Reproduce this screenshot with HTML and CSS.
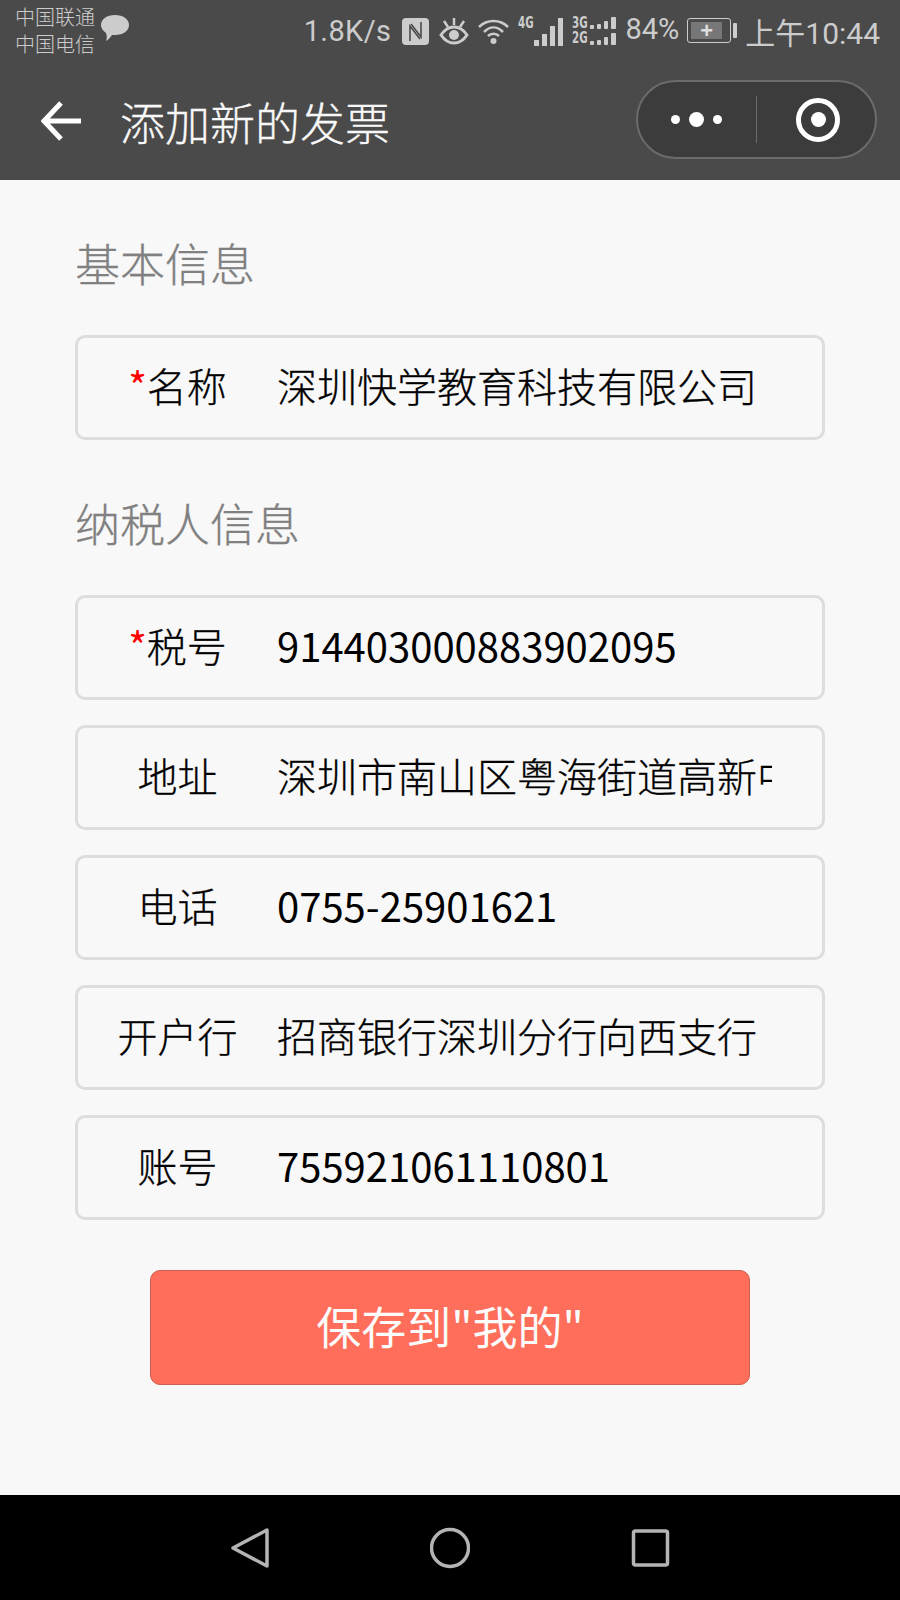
FILE: index.html
```html
<!DOCTYPE html>
<html>
	<head>
		<meta charset="UTF-8">
		<title>添加新的发票</title>
		<link rel="stylesheet" href="styles.css">
	</head>
	<body>
		<div class="header">
			<div class="status">
				<div class="carrier">
					<p>中国联通</p>
					<p>中国电信</p>
				</div>
				<svg class="bubble" width="30" height="28" viewBox="0 0 30 28"><path d="M15 1C23 1 29 5 29 11C29 17 23 21 15 21C14 21 13 21 12 21C10 24 8 26 6 27C7 24 7 22 6 19C3 17 1 14 1 11C1 5 7 1 15 1Z" fill="#ccc"/></svg>
				<div class="statusRight">
					<span class="speed">1.8K/s</span>
					<svg class="nfc" width="27" height="27" viewBox="0 0 27 27"><rect width="27" height="27" rx="4" fill="#ccc"/><path d="M8 23V8L18 21M19 4V19L9 6" fill="none" stroke="#4a4a4a" stroke-width="1.600"/></svg>
					<svg class="eye" width="30" height="28" viewBox="0 0 30 28"><path d="M2 18C6 12 10 10 15 10C20 10 24 12 28 18C24 24 20 26 15 26C10 26 6 24 2 18Z" fill="none" stroke="#ccc" stroke-width="3"/><circle cx="15" cy="18" r="5" fill="#ccc"/><path d="M15 1V8M5 4L9 10M25 4L21 10" stroke="#ccc" stroke-width="2.500"/></svg>
					<svg class="wifi" width="31" height="26" viewBox="0 0 31 26"><path d="M1 9C9 1 22 1 30 9M6 14C12 8 19 8 25 14M10 18C13 15 18 15 21 18" fill="none" stroke="#ccc" stroke-width="2.500"/><circle cx="15.500" cy="23" r="3" fill="#ccc"/></svg>
					<div class="signal">
						<span class="netTag">4G</span>
						<div class="bars">
							<i class="b1"></i><i class="b2"></i><i class="b3"></i><i class="b4"></i>
						</div>
					</div>
					<div class="signal2">
						<div class="netTags">
							<span>3G</span>
							<span>2G</span>
						</div>
						<svg width="29" height="30" viewBox="0 0 29 30" fill="#ccc">
							<rect x="1" y="9" width="4" height="4" rx="1"/><rect x="8" y="8" width="4" height="5" rx="1"/><rect x="15" y="5" width="4" height="8" rx="1"/><rect x="22" y="1" width="5" height="12" rx="1"/>
							<rect x="1" y="25" width="4" height="4" rx="1"/><rect x="8" y="24" width="4" height="5" rx="1"/><rect x="15" y="21" width="4" height="8" rx="1"/><rect x="22" y="17" width="5" height="12" rx="1"/>
						</svg>
					</div>
					<span class="percent">84%</span>
					<div class="battery">
						<div class="cell"><div class="level">+</div></div>
						<div class="nub"></div>
					</div>
					<span class="time">上午10:44</span>
				</div>
			</div>
			<div class="nav">
				<svg class="back" width="40" height="40" viewBox="0 0 40 40"><path d="M20 2L3 20L20 38M3 20H40" fill="none" stroke="#fff" stroke-width="5"/></svg>
				<h1>添加新的发票</h1>
				<div class="capsule">
					<div class="more"><i></i><i class="big"></i><i></i></div>
					<div class="line"></div>
					<div class="target"><div class="ring"><i></i></div></div>
				</div>
			</div>
		</div>

		<div class="content">
			<h2>基本信息</h2>
			<div class="row">
				<div class="label"><span class="must">*</span>名称</div>
				<div class="value">深圳快学教育科技有限公司</div>
			</div>

			<h2 class="second">纳税人信息</h2>
			<div class="rows">
				<div class="row">
					<div class="label"><span class="must">*</span>税号</div>
					<div class="value num">914403000883902095</div>
				</div>
				<div class="row">
					<div class="label">地址</div>
					<div class="value">深圳市南山区粤海街道高新中</div>
				</div>
				<div class="row">
					<div class="label">电话</div>
					<div class="value num">0755-25901621</div>
				</div>
				<div class="row">
					<div class="label">开户行</div>
					<div class="value">招商银行深圳分行向西支行</div>
				</div>
				<div class="row">
					<div class="label">账号</div>
					<div class="value num">755921061110801</div>
				</div>
			</div>

			<div class="save">保存到"我的"</div>
		</div>

		<div class="sysNav">
			<svg width="40" height="44" viewBox="0 0 40 44"><path d="M37 4V40L3 22Z" fill="none" stroke="#b4b4b4" stroke-width="3.500" stroke-linejoin="round"/></svg>
			<svg width="40" height="42" viewBox="0 0 40 42"><circle cx="20" cy="21" r="18.500" fill="none" stroke="#b4b4b4" stroke-width="3.500"/></svg>
			<svg width="40" height="40" viewBox="0 0 40 40"><rect x="3.500" y="3" width="34" height="34" rx="2" fill="none" stroke="#b4b4b4" stroke-width="3.500"/></svg>
		</div>
	</body>
</html>
```

FILE: styles.css
```css
*{
	margin: 0;
	padding: 0;
	box-sizing: border-box;
}

body{
	width: 900px;
	height: 1600px;
	display: flex;
	flex-direction: column;
	font-family: "Noto Sans CJK SC", "Noto Sans", sans-serif;
	background-color: #f8f8f8;
}

i{
	display: block;
}

/* 顶部 */
.header{
	height: 180px;
	background-color: #4a4a4a;
}

.status{
	display: flex;
	align-items: center;
	height: 62px;
	padding: 0 20px 0 15px;
	color: #ccc;
}

.carrier{
	width: 85px;
	margin-bottom: 2px;
	font-size: 20px;
	font-weight: 300;
	line-height: 27px;
}

.bubble{
	margin-bottom: 6px;
}

.statusRight{
	display: flex;
	align-items: center;
	margin-left: auto;
}

.speed,.percent,.time{
	font-family: Roboto, "Noto Sans CJK SC", sans-serif;
	font-size: 29px;
}

.speed{
	margin-right: 11px;
	letter-spacing: .4px;
}

.nfc{
	margin-right: 10px;
}

.eye{
	margin-right: 9px;
}

.wifi{
	margin-right: 9px;
}

.signal{
	display: flex;
	align-items: flex-start;
	height: 30px;
	margin-right: 9px;
}

.netTag,.netTags span{
	display: block;
	width: 16px;
	font-family: "DejaVu Sans", sans-serif;
	font-size: 15px;
	font-stretch: condensed;
	font-weight: bold;
	line-height: 15px;
	white-space: nowrap;
	transform: scaleX(.76);
	transform-origin: left;
}

.bars{
	display: flex;
	align-items: flex-end;
	gap: 3px;
	height: 30px;
}

.bars i{
	width: 5px;
	background-color: #ccc;
}

.bars .b1{
	height: 6px;
}
.bars .b2{
	height: 12px;
}
.bars .b3{
	height: 20px;
}
.bars .b4{
	height: 28px;
}

.signal2{
	display: flex;
	margin-right: 7px;
}

.netTags{
	margin-right: 1px;
}

.percent{
	margin-right: 8px;
	margin-bottom: 5px;
}

.battery{
	display: flex;
	align-items: center;
	margin-right: 8px;
	margin-bottom: 2px;
}

.cell{
	width: 44px;
	height: 25px;
	padding: 3px;
	border: 1px solid #ccc;
	border-radius: 3px;
}

.level{
	width: 31px;
	height: 17px;
	background-color: #777;
	color: #ddd;
	font-family: "Liberation Sans", sans-serif;
	font-size: 22px;
	font-weight: bold;
	line-height: 17px;
	text-align: center;
}

.nub{
	width: 4px;
	height: 15px;
	margin-left: 2px;
	background-color: #ccc;
	border-radius: 1px;
}

.time{
	font-size: 30px;
}

.nav{
	display: flex;
	align-items: center;
	height: 118px;
	padding: 0 23px 0 41px;
}

.back{
	margin-right: 39px;
}

.nav h1{
	font-size: 45px;
	font-weight: 300;
	color: #f8f8f8;
	-webkit-text-stroke: .3px #f8f8f8;
}

.capsule{
	display: flex;
	align-items: center;
	width: 241px;
	height: 79px;
	margin-left: auto;
	margin-top: -3px;
	background-color: #3c3c3c;
	border: 2px solid #6b6b6b;
	border-radius: 40px;
}

.more{
	display: flex;
	align-items: center;
	justify-content: center;
	gap: 9px;
	width: 119px;
}

.more i{
	width: 9px;
	height: 9px;
	border-radius: 50%;
	background-color: #fff;
}

.more .big{
	width: 15px;
	height: 15px;
}

.line{
	width: 1px;
	height: 47px;
	background-color: #6b6b6b;
}

.target{
	display: flex;
	align-items: center;
	justify-content: center;
	width: 119px;
	padding-left: 5px;
}

.ring{
	display: flex;
	align-items: center;
	justify-content: center;
	width: 44px;
	height: 44px;
	border: 5px solid #fff;
	border-radius: 50%;
}

.ring i{
	width: 15px;
	height: 15px;
	border-radius: 50%;
	background-color: #fff;
}

/* 表单 */
.content{
	flex: 1;
	padding: 53px 75px 0;
}

.content h2{
	height: 60px;
	margin-bottom: 42px;
	font-size: 45px;
	font-weight: 300;
	line-height: 60px;
	color: #808080;
	-webkit-text-stroke: .3px #808080;
}

.content .second{
	margin-top: 53px;
}

.rows{
	display: flex;
	flex-direction: column;
	gap: 25px;
}

.row{
	display: flex;
	align-items: center;
	height: 105px;
	padding-bottom: 6px;
	border: 3px solid #ddd;
	border-radius: 10px;
	font-size: 40px;
	font-weight: 300;
	color: #000;
	-webkit-text-stroke: .3px #000;
}

.label{
	flex: none;
	width: 199px;
	text-align: center;
}

.must{
	font-weight: 400;
	color: red;
	-webkit-text-stroke: 0;
}

.value{
	width: 495px;
	overflow: hidden;
	white-space: nowrap;
}

.num{
	font-weight: 400;
	-webkit-text-stroke: 0;
}

.save{
	width: 600px;
	height: 115px;
	margin: 50px auto 0;
	background-color: #ff6e5a;
	border: 1px solid #c9604f;
	border-radius: 10px;
	font-size: 45px;
	font-weight: 400;
	line-height: 109px;
	text-align: center;
	color: #fbfbfb;
}

/* 底部导航 */
.sysNav{
	display: flex;
	align-items: center;
	justify-content: space-between;
	height: 105px;
	padding: 0 230px;
	background-color: #000;
}
```
